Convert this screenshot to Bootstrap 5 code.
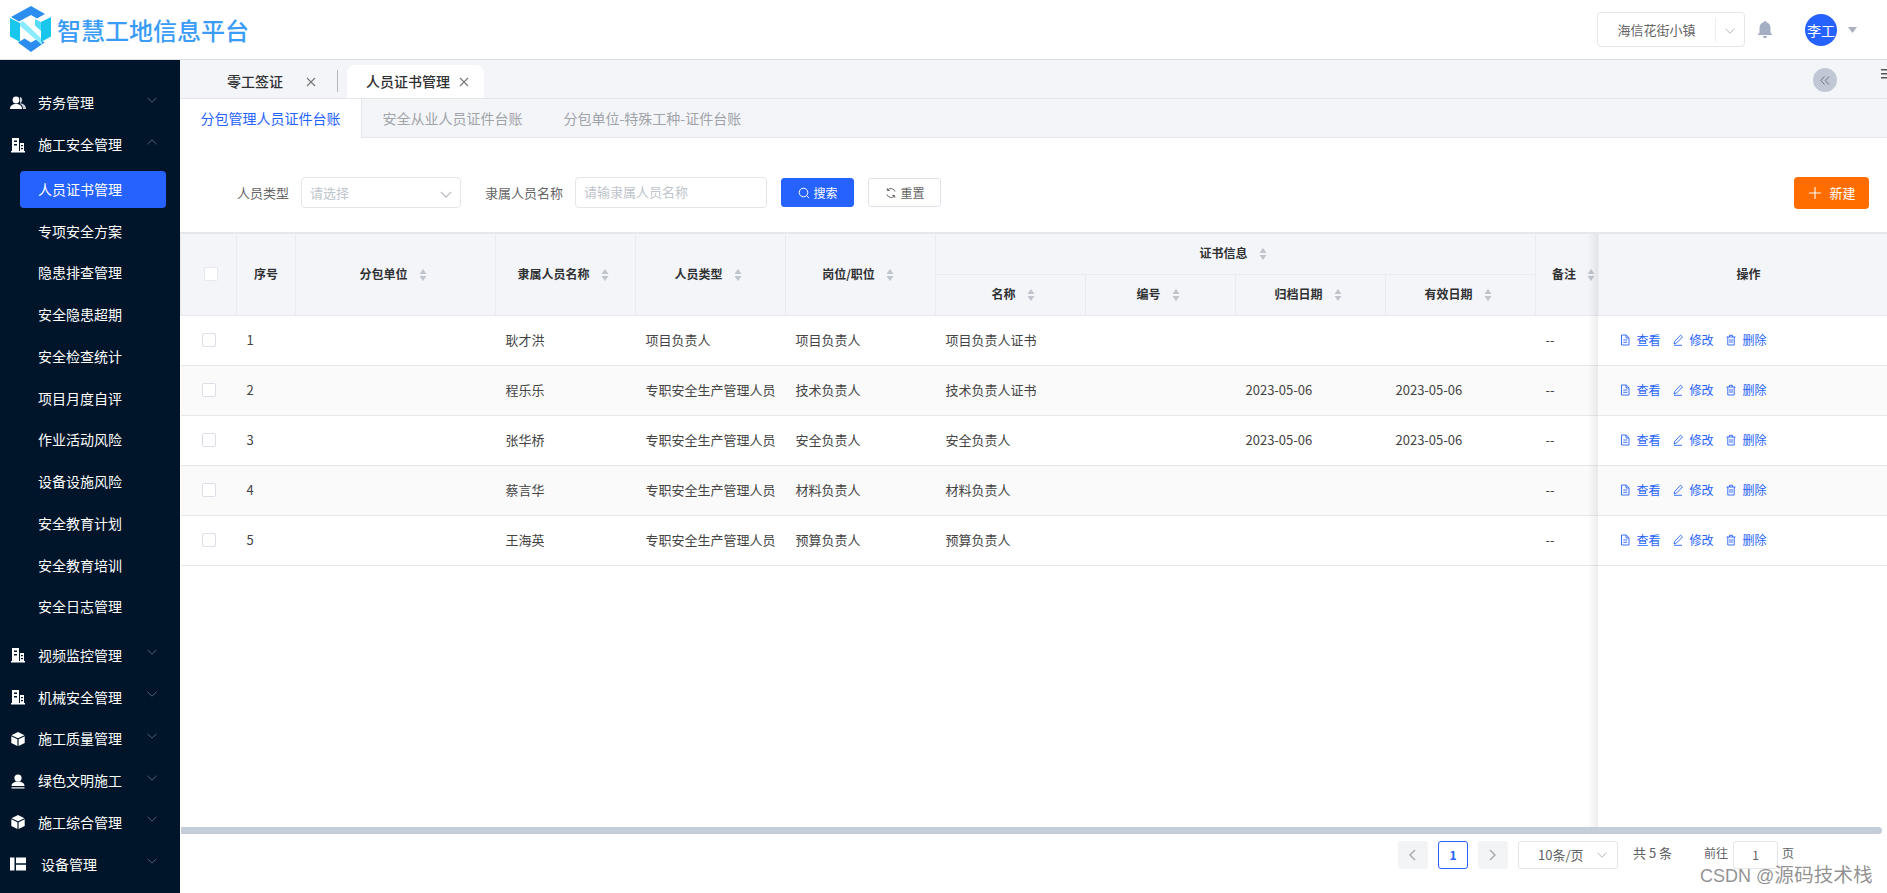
<!DOCTYPE html>
<html lang="zh-CN">
<head>
<meta charset="utf-8">
<title>智慧工地信息平台</title>
<link href="https://cdn.jsdelivr.net/npm/bootstrap@5.3.0/dist/css/bootstrap.min.css" rel="stylesheet">
<style>
html,body{width:1887px;height:893px;overflow:hidden;}
body{font-family:"Noto Sans CJK SC","Liberation Sans",sans-serif;font-size:13px;color:#333;background:#fff;}
.top-bar{height:60px;border-bottom:1px solid #dcdee3;padding-left:10px;padding-right:30px;}
.brand-text{font-size:24px;font-weight:500;color:#3a9cf6;margin-left:5px;line-height:1;}
.site-pick{width:148px;height:35px;border:1px solid #e4e6eb;border-radius:4px;color:#666;}
.site-name{width:119px;text-align:center;border-right:1px solid #eceef2;line-height:24px;}
.site-arrow{width:28px;text-align:center;}
.bell-ic{margin-left:12px;}
.avatar-dot{width:32px;height:32px;border-radius:50%;background:#2662fd;color:#fff;font-size:14px;line-height:32px;text-align:center;margin-left:32px;}
.avatar-caret{margin-left:11px;}
.page-body{height:833px;}
.side-nav{width:180px;flex:none;background:#00142a;color:#fff;padding-top:22px;}
.nav-head{height:41.8px;font-size:14px;padding-left:10px;padding-right:23px;}
.nav-head .ic{width:16px;height:16px;flex:none;}
.nav-head .lbl{margin-left:12px;flex:1;}
.nav-head .lbl.wide{margin-left:15px;}
.nav-head .chev{margin-top:-6px;}
.sub-list{padding:3px 0 6.5px;}
.sub-row{height:41.75px;padding:2.4px 14px 2.4px 20px;font-size:14px;}
.sub-row span{display:block;height:37px;line-height:37px;padding-left:18px;border-radius:4px;}
.sub-row.on span{background:#2662fd;}
.main-pane{flex:1;min-width:0;}
.tab-strip{height:39px;background:#f4f5f9;border-bottom:1px solid #e4e6eb;padding-top:5px;}
.tab-one{height:33px;font-size:14px;font-weight:500;color:#303133;}
.tab-a{width:157px;padding-left:47px;}
.tab-a .x{margin-left:23px;}
.tab-sep{width:1px;height:22px;background:#b4b6ba;margin-right:9px;margin-top:5px;}
.tab-b{width:137px;background:#fff;border-radius:8px 8px 0 0;padding-left:19px;margin-right:auto;}
.tab-b .x{margin-left:9px;}
.fold-dot{width:24px;height:24px;border-radius:50%;background:#c0c8d6;margin-top:3px;margin-right:44px;}
.menu-ic{width:12px;margin-right:-6px;margin-top:3px;flex:none;}
.sub-strip{height:39px;background:#f4f5f9;border-bottom:1px solid #e4e6eb;font-size:14px;color:#a0a3a8;}
.sub-tab{padding:0 20.5px;line-height:38px;}
.sub-tab.on{color:#2662fd;background:#fff;height:39px;border-right:1px solid #e4e6eb;width:182px;}
.filter-row{height:94px;padding:15px 18px 0 57px;}
.filter-lbl{color:#666;margin-right:12px;}
.filter-lbl.second{margin-left:24px;margin-right:12px;}
.fake-field{height:31px;border:1px solid #e4e6eb;border-radius:4px;color:#c0c4cc;padding:0 8px;line-height:28px;}
.f-sel{width:160px;}
.f-inp{width:192px;}
.act-btn{height:29px;width:73px;font-size:12px;padding:0;border-radius:3px;margin-left:14px;}
.act-btn.blue{background:#2662fd;border:1px solid #2662fd;color:#fff;}
.act-btn.plain{background:#fff;border:1px solid #dfe2e8;color:#666;}
.add-btn{height:32px;width:75px;background:#ff6d00;color:#fff;border:0;border-radius:4px;font-size:13px;padding:0 0 0 2px;margin-left:auto;}
.tbl-zone{flex:1;overflow:hidden;position:relative;border-top:2px solid #e6e7ea;min-height:0;}
.cert-tbl{table-layout:fixed;width:1718px;margin:0;border-collapse:collapse;}
.cert-tbl th{background:#f4f5f9;font-size:12px;font-weight:700;color:#303133;text-align:center;vertical-align:middle;padding:0 4px;border:1px solid #e9ebf1;border-top:0;white-space:nowrap;box-shadow:none;}
.cert-tbl th.th-name{padding-left:14px;}
.cert-tbl th.th-note{padding:0 0 0 16px;text-align:left;}
.cert-tbl th.th-note .sort-ic{margin-right:0;}
.cert-tbl td{height:50px;font-size:13px;color:#444;padding:0 10px;vertical-align:middle;border:0;border-bottom:1px solid #e6e7ea;white-space:nowrap;box-shadow:none;background:#fff;}
.cert-tbl tr.alt td{background:#fafafa;}
.cert-tbl .h1{height:40px;}
.cert-tbl .h2{height:41px;}
.sort-ic{margin-left:11px;margin-right:5px;vertical-align:-3px;}
.tick-box{display:block;width:14px;height:14px;border:1px solid #dcdfe6;border-radius:2px;background:#fff;margin-left:11px;}
th .tick-box{margin-left:19px;border-color:#e6e8ed;}
.op-cell{padding-left:20px!important;font-size:12px!important;color:#2662fd!important;}
.op-link{display:inline-flex;align-items:center;gap:6px;margin-right:11px;}
.fix-shade{position:absolute;left:1408px;top:0;bottom:0;width:10px;background:linear-gradient(to left,rgba(0,0,0,.07),rgba(0,0,0,0));pointer-events:none;}
.h-track{height:7px;flex:none;margin-left:1px;margin-right:5px;background:#c5ced8;border-radius:0 4px 4px 0;}
.pager-row{height:59px;padding:7px 93px 0 0;font-size:12px;color:#606266;}
.pg-btn{width:30px;height:28px;border-radius:3px;background:#f3f4f5;color:#a8abb2;}
.pg-btn.cur{background:#fff;border:1px solid #2662fd;color:#2662fd;font-weight:700;margin:0 10px;}
.pg-sel{width:100px;height:28px;border:1px solid #e4e6eb;border-radius:3px;margin-left:10px;padding-left:19px;padding-right:10px;font-size:13px;}
.pg-total{margin-left:15px;width:71px;font-size:13px;line-height:24px;}
.pg-inp{width:45px;height:28px;border:1px solid #e4e6eb;border-radius:3px;text-align:center;line-height:26px;margin:0 4px 0 5px;}
.mark-text{position:absolute;left:1700px;top:861px;color:rgba(110,110,110,.75);font-family:"Liberation Sans","Noto Sans CJK SC",sans-serif;font-size:18px;line-height:26px;white-space:nowrap;}
.mark-text b{font-weight:400;font-size:19.7px;font-family:"Noto Sans CJK SC",sans-serif;}
.sprite{position:absolute;width:0;height:0;}
</style>
</head>
<body>
<svg class="sprite" aria-hidden="true">
  <symbol id="s-sort" viewBox="0 0 8 14"><path d="M4 1 7.500 6H.5z M4 13 .5 8h7z" fill="#c0c4cc"/></symbol>
  <symbol id="s-chev" viewBox="0 0 10 6"><path d="M.5.8 5 5.200 9.500.8" fill="none" stroke="#55616f" stroke-width="1"/></symbol>
  <symbol id="s-chev-lt" viewBox="0 0 10 6"><path d="M.5.8 5 5.200 9.500.8" fill="none" stroke="#b4b8c0" stroke-width="1"/></symbol>
  <symbol id="s-up" viewBox="0 0 10 6"><path d="M.5 5.200 5 .8l4.500 4.400" fill="none" stroke="#55616f" stroke-width="1"/></symbol>
  <symbol id="s-x" viewBox="0 0 10 10"><path d="M1 1l8 8M9 1 1 9" stroke="#777" stroke-width="1.100" fill="none"/></symbol>
  <symbol id="s-bld" viewBox="0 0 16 16"><path d="M2 1h7v13H2zM10 6h4v8h-4zM1 14h14v1.500H1z" fill="#fff"/><path d="M4 3.500h3v1.500H4zM4 7h3v1.500H4zM11 8h2v1.300h-2zM11 11h2v1.300h-2z" fill="#00142a"/></symbol>
  <symbol id="s-cube" viewBox="0 0 16 16"><path d="M8 1l6.500 3.200L8 7.200 1.500 4.200z" fill="#fff"/><path d="M1.300 5.300 7.400 8.200V15L1.300 12z M14.700 5.300 8.600 8.200V15l6.100-3z" fill="#fff"/></symbol>
  <symbol id="s-doc" viewBox="0 0 12 12"><path d="M2.500 1h4.700L10 3.800V11H2.500zM4.300 6h4M4.300 8.300h4M7 1v3h3" fill="none" stroke="#2662fd" stroke-width=".9"/></symbol>
  <symbol id="s-pen" viewBox="0 0 12 12"><path d="M8.500 1.200 10.500 3 4.500 9 2 10l.8-2.700zM2 11.300h8" fill="none" stroke="#2662fd" stroke-width=".9"/></symbol>
  <symbol id="s-bin" viewBox="0 0 12 12"><path d="M1.500 3h9M4.500 3V1.300h3V3M2.800 3v8h6.400V3M5 5v4M7 5v4" fill="none" stroke="#2662fd" stroke-width=".9"/></symbol>
</svg>

<header class="top-bar d-flex align-items-center bg-white">
  <svg width="42" height="47" viewBox="0 0 42 47" aria-label="logo">
    <path d="M1 11 21 0l14 8-8 4.500-6-3.500L9 15.500z" fill="#2b8df0"/>
    <path d="M8 36.500l6.500-4 6.500 4 7-4 6.500 4L21 46z" fill="#2b8df0"/>
    <path d="M0 12l10 5v19L0 30.500z" fill="#19c6ec"/>
    <path d="M10 17l3-2 19 18v6L10 20z" fill="#8cecff"/>
    <path d="M31 16l10-5v19.500L31 36z" fill="#19c6ec"/>
    <path d="M25 13l6 3v9l-6-5.500z" fill="#52dcf7"/>
  </svg>
  <span class="brand-text">智慧工地信息平台</span>
  <div class="site-pick d-flex align-items-center ms-auto">
    <span class="site-name">海信花街小镇</span>
    <span class="site-arrow"><svg width="10" height="6"><use href="#s-chev-lt"/></svg></span>
  </div>
  <svg class="bell-ic" width="16" height="18" viewBox="0 0 16 18"><path d="M8 0c.8 0 1.300.6 1.300 1.300C12 2 13.500 4.300 13.500 7v4.500L15.500 14H.5l2-2.500V7c0-2.700 1.500-5 4.200-5.700C6.700.6 7.200 0 8 0zM5.800 15h4.400c0 1.200-1 2.300-2.200 2.300S5.800 16.200 5.800 15z" fill="#a3adc4"/></svg>
  <div class="avatar-dot">李工</div>
  <svg class="avatar-caret" width="9" height="6" viewBox="0 0 9 6"><path d="M0 0h9L4.500 6z" fill="#aab0bd"/></svg>
</header>

<div class="page-body d-flex">
  <nav class="side-nav">
    <div class="nav-head d-flex align-items-center">
      <svg class="ic" viewBox="0 0 16 16"><circle cx="6" cy="5" r="3.400" fill="#fff"/><path d="M0 14c0-3.500 2.500-5 6-5s6 1.500 6 5z" fill="#fff"/><path d="M10 1.800a3.400 3.400 0 0 1 0 6.400c3.500.4 6 2 6 5.800h-3c0-2.500-1-4-3-5z" fill="#c9ced6"/></svg>
      <span class="lbl">劳务管理</span><svg class="chev" width="10" height="6"><use href="#s-chev"/></svg>
    </div>
    <div class="nav-head d-flex align-items-center">
      <svg class="ic"><use href="#s-bld"/></svg>
      <span class="lbl">施工安全管理</span><svg class="chev" width="10" height="6"><use href="#s-up"/></svg>
    </div>
    <div class="sub-list">
      <div class="sub-row on"><span>人员证书管理</span></div>
      <div class="sub-row"><span>专项安全方案</span></div>
      <div class="sub-row"><span>隐患排查管理</span></div>
      <div class="sub-row"><span>安全隐患超期</span></div>
      <div class="sub-row"><span>安全检查统计</span></div>
      <div class="sub-row"><span>项目月度自评</span></div>
      <div class="sub-row"><span>作业活动风险</span></div>
      <div class="sub-row"><span>设备设施风险</span></div>
      <div class="sub-row"><span>安全教育计划</span></div>
      <div class="sub-row"><span>安全教育培训</span></div>
      <div class="sub-row"><span>安全日志管理</span></div>
    </div>
    <div class="nav-head d-flex align-items-center">
      <svg class="ic"><use href="#s-bld"/></svg>
      <span class="lbl">视频监控管理</span><svg class="chev" width="10" height="6"><use href="#s-chev"/></svg>
    </div>
    <div class="nav-head d-flex align-items-center">
      <svg class="ic"><use href="#s-bld"/></svg>
      <span class="lbl">机械安全管理</span><svg class="chev" width="10" height="6"><use href="#s-chev"/></svg>
    </div>
    <div class="nav-head d-flex align-items-center">
      <svg class="ic"><use href="#s-cube"/></svg>
      <span class="lbl">施工质量管理</span><svg class="chev" width="10" height="6"><use href="#s-chev"/></svg>
    </div>
    <div class="nav-head d-flex align-items-center">
      <svg class="ic" viewBox="0 0 16 16"><circle cx="8" cy="5" r="3.600" fill="#fff"/><path d="M1.500 13c0-3 3-4.500 6.500-4.500s6.500 1.500 6.500 4.500z" fill="#fff"/><path d="M1.500 14.300h13v1.200h-13z" fill="#fff"/></svg>
      <span class="lbl">绿色文明施工</span><svg class="chev" width="10" height="6"><use href="#s-chev"/></svg>
    </div>
    <div class="nav-head d-flex align-items-center">
      <svg class="ic"><use href="#s-cube"/></svg>
      <span class="lbl">施工综合管理</span><svg class="chev" width="10" height="6"><use href="#s-chev"/></svg>
    </div>
    <div class="nav-head d-flex align-items-center">
      <svg class="ic" viewBox="0 0 16 16"><path d="M0 1.500h4.500v13H0zM6 1.500h10v5.800H6zM6 8.700h10v5.800H6z" fill="#fff"/></svg>
      <span class="lbl wide">设备管理</span><svg class="chev" width="10" height="6"><use href="#s-chev"/></svg>
    </div>
  </nav>

  <main class="main-pane d-flex flex-column">
    <div class="tab-strip d-flex">
      <div class="tab-one tab-a d-flex align-items-center">零工签证<svg class="x" width="10" height="10"><use href="#s-x"/></svg></div>
      <div class="tab-sep"></div>
      <div class="tab-one tab-b d-flex align-items-center">人员证书管理<svg class="x" width="10" height="10"><use href="#s-x"/></svg></div>
      <div class="fold-dot d-flex align-items-center justify-content-center">
        <svg width="10" height="9" viewBox="0 0 10 9"><path d="M4.500.5.800 4.500l3.700 4M9 .5 5.300 4.500 9 8.500" fill="none" stroke="#6b7280" stroke-width="1"/></svg>
      </div>
      <svg class="menu-ic" width="12" height="12" viewBox="0 0 12 12"><path d="M0 1h12v1.500H0zM0 5h12v1.500H0zM0 9h12v1.500H0z" fill="#555"/></svg>
    </div>
    <div class="sub-strip d-flex">
      <div class="sub-tab on">分包管理人员证件台账</div>
      <div class="sub-tab">安全从业人员证件台账</div>
      <div class="sub-tab">分包单位-特殊工种-证件台账</div>
    </div>
    <div class="filter-row d-flex align-items-center">
      <span class="filter-lbl">人员类型</span>
      <div class="fake-field f-sel d-flex align-items-center justify-content-between"><span>请选择</span><svg class="mt-1" width="12" height="7" viewBox="0 0 10 6"><use href="#s-chev-lt"/></svg></div>
      <span class="filter-lbl second">隶属人员名称</span>
      <div class="fake-field f-inp">请输隶属人员名称</div>
      <button type="button" class="btn act-btn blue d-flex align-items-center justify-content-center gap-1">
        <svg width="12" height="12" viewBox="0 0 12 12"><circle cx="5.500" cy="5.500" r="4.300" fill="none" stroke="#fff"/><path d="M8.700 8.700 11 11" stroke="#fff"/></svg>搜索</button>
      <button type="button" class="btn act-btn plain d-flex align-items-center justify-content-center gap-1">
        <svg width="12" height="12" viewBox="0 0 12 12"><path d="M10 4.500A4.300 4.300 0 0 0 2.500 3.200M2 7.500a4.300 4.300 0 0 0 7.500 1.300" fill="none" stroke="#666"/><path d="M2.300 1.200v2.300h2.300M9.700 10.800V8.500H7.400" fill="none" stroke="#666"/></svg>重置</button>
      <button type="button" class="btn add-btn d-flex align-items-center justify-content-center gap-2">
        <svg width="12" height="12" viewBox="0 0 12 12"><path d="M6 0v12M0 6h12" stroke="#fff" stroke-width="1.100"/></svg>新建</button>
    </div>

    <div class="tbl-zone">
      <table class="table cert-tbl">
        <colgroup><col style="width:56px"><col style="width:59px"><col style="width:200px"><col style="width:140px"><col style="width:150px"><col style="width:150px"><col style="width:150px"><col style="width:150px"><col style="width:150px"><col style="width:150px"><col style="width:63px"><col style="width:300px"></colgroup>
        <thead>
          <tr class="h1">
            <th rowspan="2"><span class="tick-box"></span></th>
            <th rowspan="2">序号</th>
            <th rowspan="2">分包单位<svg class="sort-ic" width="8" height="14"><use href="#s-sort"/></svg></th>
            <th rowspan="2">隶属人员名称<svg class="sort-ic" width="8" height="14"><use href="#s-sort"/></svg></th>
            <th rowspan="2">人员类型<svg class="sort-ic" width="8" height="14"><use href="#s-sort"/></svg></th>
            <th rowspan="2">岗位/职位<svg class="sort-ic" width="8" height="14"><use href="#s-sort"/></svg></th>
            <th colspan="4">证书信息<svg class="sort-ic" width="8" height="14"><use href="#s-sort"/></svg></th>
            <th rowspan="2" class="th-note">备注<svg class="sort-ic" width="8" height="14"><use href="#s-sort"/></svg></th>
            <th rowspan="2">操作</th>
          </tr>
          <tr class="h2">
            <th class="th-name">名称<svg class="sort-ic" width="8" height="14"><use href="#s-sort"/></svg></th>
            <th>编号<svg class="sort-ic" width="8" height="14"><use href="#s-sort"/></svg></th>
            <th>归档日期<svg class="sort-ic" width="8" height="14"><use href="#s-sort"/></svg></th>
            <th>有效日期<svg class="sort-ic" width="8" height="14"><use href="#s-sort"/></svg></th>
          </tr>
        </thead>
        <tbody>
          <tr>
            <td><span class="tick-box"></span></td><td>1</td><td></td><td>耿才洪</td><td>项目负责人</td><td>项目负责人</td><td>项目负责人证书</td><td></td><td></td><td></td><td>--</td>
            <td class="op-cell"><span class="op-link"><svg width="12" height="12"><use href="#s-doc"/></svg>查看</span><span class="op-link"><svg width="12" height="12"><use href="#s-pen"/></svg>修改</span><span class="op-link"><svg width="12" height="12"><use href="#s-bin"/></svg>删除</span></td>
          </tr>
          <tr class="alt">
            <td><span class="tick-box"></span></td><td>2</td><td></td><td>程乐乐</td><td>专职安全生产管理人员</td><td>技术负责人</td><td>技术负责人证书</td><td></td><td>2023-05-06</td><td>2023-05-06</td><td>--</td>
            <td class="op-cell"><span class="op-link"><svg width="12" height="12"><use href="#s-doc"/></svg>查看</span><span class="op-link"><svg width="12" height="12"><use href="#s-pen"/></svg>修改</span><span class="op-link"><svg width="12" height="12"><use href="#s-bin"/></svg>删除</span></td>
          </tr>
          <tr>
            <td><span class="tick-box"></span></td><td>3</td><td></td><td>张华桥</td><td>专职安全生产管理人员</td><td>安全负责人</td><td>安全负责人</td><td></td><td>2023-05-06</td><td>2023-05-06</td><td>--</td>
            <td class="op-cell"><span class="op-link"><svg width="12" height="12"><use href="#s-doc"/></svg>查看</span><span class="op-link"><svg width="12" height="12"><use href="#s-pen"/></svg>修改</span><span class="op-link"><svg width="12" height="12"><use href="#s-bin"/></svg>删除</span></td>
          </tr>
          <tr class="alt">
            <td><span class="tick-box"></span></td><td>4</td><td></td><td>蔡言华</td><td>专职安全生产管理人员</td><td>材料负责人</td><td>材料负责人</td><td></td><td></td><td></td><td>--</td>
            <td class="op-cell"><span class="op-link"><svg width="12" height="12"><use href="#s-doc"/></svg>查看</span><span class="op-link"><svg width="12" height="12"><use href="#s-pen"/></svg>修改</span><span class="op-link"><svg width="12" height="12"><use href="#s-bin"/></svg>删除</span></td>
          </tr>
          <tr>
            <td><span class="tick-box"></span></td><td>5</td><td></td><td>王海英</td><td>专职安全生产管理人员</td><td>预算负责人</td><td>预算负责人</td><td></td><td></td><td></td><td>--</td>
            <td class="op-cell"><span class="op-link"><svg width="12" height="12"><use href="#s-doc"/></svg>查看</span><span class="op-link"><svg width="12" height="12"><use href="#s-pen"/></svg>修改</span><span class="op-link"><svg width="12" height="12"><use href="#s-bin"/></svg>删除</span></td>
          </tr>
        </tbody>
      </table>
      <div class="fix-shade"></div>
    </div>
    <div class="h-track"></div>
    <div class="pager-row d-flex justify-content-end align-items-start flex-none">
      <div class="pg-btn d-flex align-items-center justify-content-center"><svg width="7" height="12" viewBox="0 0 7 12"><path d="M6 1 1 6l5 5" fill="none" stroke="#a8abb2" stroke-width="1.500"/></svg></div>
      <div class="pg-btn cur d-flex align-items-center justify-content-center">1</div>
      <div class="pg-btn d-flex align-items-center justify-content-center"><svg width="7" height="12" viewBox="0 0 7 12"><path d="M1 1l5 5-5 5" fill="none" stroke="#a8abb2" stroke-width="1.500"/></svg></div>
      <div class="pg-sel d-flex align-items-center justify-content-between"><span>10条/页</span><svg width="10" height="6"><use href="#s-chev-lt"/></svg></div>
      <div class="pg-total">共 5 条</div>
      <div class="lh-lg">前往</div>
      <div class="pg-inp">1</div>
      <div class="lh-lg">页</div>
    </div>
  </main>
</div>
<div class="mark-text">CSDN @<b>源码技术栈</b></div>
</body>
</html>
